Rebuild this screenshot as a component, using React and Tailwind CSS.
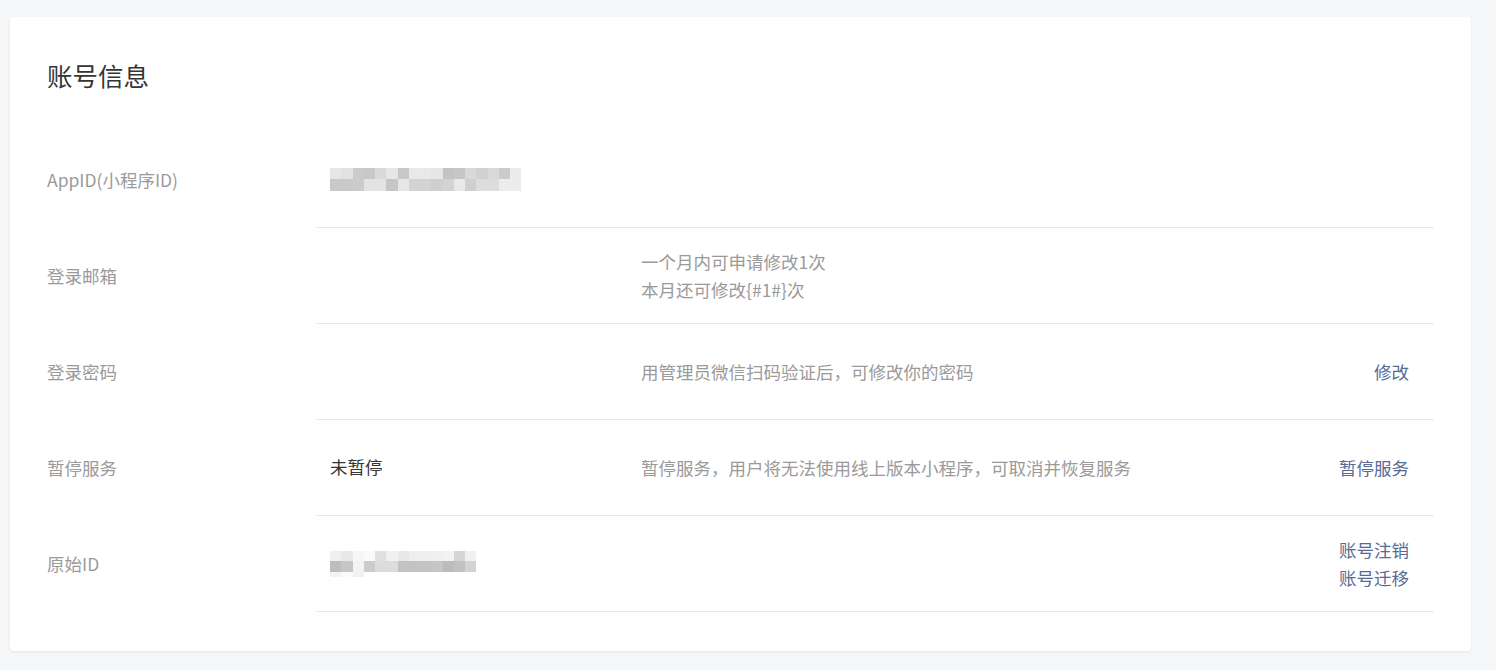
import React from 'react';

const appIdBlur = [
    ['#e6e6e6', '#e2e2e2', '#cbcbcb', '#c8c8c8', '#d9d9d9', '#e6e6e6', '#c8c8c8', '#e9e9e9', '#e9e9e9', '#e6e6e6', '#c3c3c3', '#c6c6c6', '#d9d9d9', '#d1d1d1', '#d9d9d9', '#cbcbcb', '#ececec'],
    ['#c9c9c9', '#c9c9c9', '#cbcbcb', '#e3e3e3', '#e3e3e3', '#c6c6c6', '#e6e6e6', '#d3d3d3', '#d3d3d3', '#cfcfcf', '#d3d3d3', '#e9e9e9', '#cfcfcf', '#dddddd', '#dddddd', '#ececec', '#ececec'],
];

const originBlur = [
    ['#f0f0f0', '#e8e8e8', '#f6f6f6', '#fafafa', '#e0e0e0', '#f0f0f0', '#e8e8e8', '#eeeeee', '#efefef', '#f0f0f0', '#f2f2f2', '#d5d5d5', '#f0f0f0'],
    ['#bdbdbd', '#c6c6c6', '#f3f3f3', '#cccccc', '#dcdcdc', '#dcdcdc', '#c3c3c3', '#c3c3c3', '#c3c3c3', '#c6c6c6', '#bbbbbb', '#c1c1c1', '#d3d3d3'],
    ['#f3f3f3', '#fbfbfb', '#f1f1f1'],
];

// pixelated placeholder for masked ids
const Blur = ({ rows, cellW, heights }) => (
    <div className="flex flex-col">
        {rows.map((row, i) => (
            <div key={i} className="flex">
                {row.map((c, j) => (
                    <div key={j} style={{ background: c, width: cellW, height: heights[i] }} />
                ))}
            </div>
        ))}
    </div>
);

const Row = ({ label, value, desc, actions }) => (
    <div className="flex">
        <div className="w-[270px] shrink-0 flex items-center text-[#9a9a9a]">{label}</div>
        <div className="flex-1 flex items-center h-[96px] border-b border-[#e7e7e7] pl-[13px] pr-[25px]">
            <div className="w-[311px] shrink-0 text-[#353535]">{value}</div>
            <div className="flex-1 text-[#9a9a9a] leading-[28px]">{desc}</div>
            <div className="flex flex-col items-end text-[#576b95] leading-[28px]">
                {actions && actions.map(a => <span key={a} className="cursor-pointer">{a}</span>)}
            </div>
        </div>
    </div>
);

const App = () => {
    return (
        <div
            className="min-h-[670px] bg-[#f6f7f9] pt-[17px] pl-[10px] pr-[25px]"
            style={{ fontFamily: '"Noto Sans CJK SC", "Noto Sans", sans-serif' }}
        >
            <div className="bg-white rounded-[4px] shadow-[0_1px_3px_rgba(0,0,0,0.08)] px-[37px] pt-[42px] pb-[39px] text-[17.5px]">
                <h2 className="text-[25.5px] leading-[32px] text-[#353535] font-normal">账号信息</h2>
                <div className="mt-[41px]">
                    <Row label="AppID(小程序ID)" value={<Blur rows={appIdBlur} cellW={11.25} heights={[11, 12]} />} />
                    <Row
                        label="登录邮箱"
                        desc={<><div>一个月内可申请修改1次</div><div>本月还可修改{'{#1#}'}次</div></>}
                    />
                    <Row label="登录密码" desc="用管理员微信扫码验证后，可修改你的密码" actions={['修改']} />
                    <Row
                        label="暂停服务"
                        value="未暂停"
                        desc="暂停服务，用户将无法使用线上版本小程序，可取消并恢复服务"
                        actions={['暂停服务']}
                    />
                    <Row
                        label="原始ID"
                        value={<Blur rows={originBlur} cellW={11.25} heights={[10, 11, 5]} />}
                        actions={['账号注销', '账号迁移']}
                    />
                </div>
            </div>
        </div>
    );
};

export default App;
